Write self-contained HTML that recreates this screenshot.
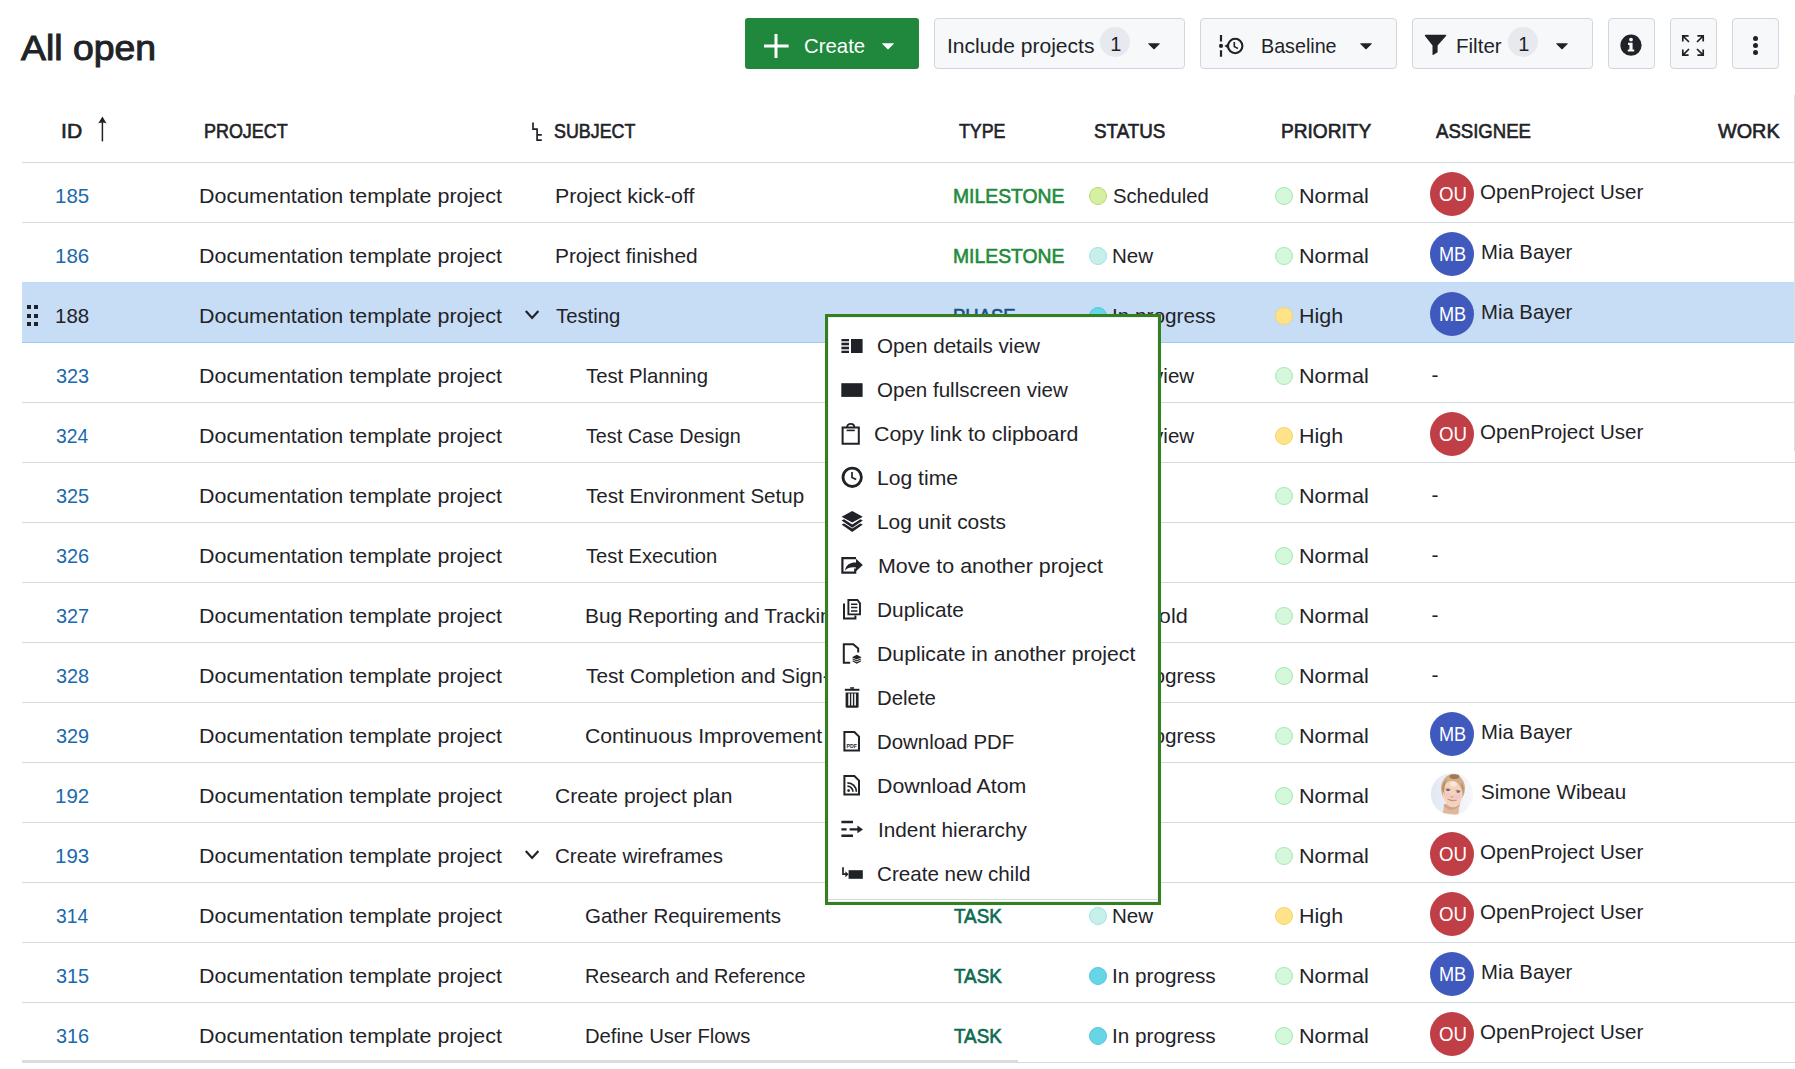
<!DOCTYPE html><html lang="en"><head><meta charset="utf-8"><title>All open</title><style>
html,body{margin:0;padding:0;background:#fff}
body{width:1795px;height:1069px;overflow:hidden;position:relative;font-family:"Liberation Sans",sans-serif;color:#1f2328}
.abs,.t,i{position:absolute;display:block}
.t{white-space:nowrap;line-height:1;transform-origin:0 0}
.dot{width:18px;height:18px;box-sizing:border-box;border-radius:50%;border:1px solid}
.av{width:44px;height:44px;border-radius:50%}
.ln{position:absolute;left:22px;width:1773px;height:1px;background:#d3dae2}
#menu{position:absolute;left:825px;top:314px;width:336px;height:591px;box-sizing:border-box;border:3px solid #35801e;background:#fff;box-shadow:inset 0 0 0 1px #f1effb}
</style></head><body>
<header class="toolbar">
<div style="position:absolute;top:18px;height:51px;box-sizing:border-box;border-radius:4px;left:745px;width:174px;background:#1f883d;border-radius:3px"></div>
<svg class="abs" style="left:763px;top:33px" width="26" height="26" viewBox="0 0 26 26"><path d="M13 1 V25 M1 13 H25.6" stroke="#fff" stroke-width="3" fill="none"/></svg>
<svg class="abs" style="left:881px;top:42px" width="14" height="9" viewBox="0 0 14 9"><path d="M1.6 1.2 H12.4 Q13.2 1.4 12.6 2.1 L7.6 7.1 Q7 7.6 6.4 7.1 L1.4 2.1 Q0.8 1.4 1.6 1.2Z" fill="#fff"/></svg>
<div style="position:absolute;top:18px;height:51px;box-sizing:border-box;border-radius:4px;left:934px;width:251px;background:#f6f8fa;border:1px solid #d0d7de"></div>
<i style="position:absolute;left:1100px;top:27px;width:30px;height:30px;border-radius:50%;background:#e6e9ee"></i>
<svg class="abs" style="left:1147px;top:42px" width="14" height="9" viewBox="0 0 14 9"><path d="M1.6 1.2 H12.4 Q13.2 1.4 12.6 2.1 L7.6 7.1 Q7 7.6 6.4 7.1 L1.4 2.1 Q0.8 1.4 1.6 1.2Z" fill="#1f2328"/></svg>
<div style="position:absolute;top:18px;height:51px;box-sizing:border-box;border-radius:4px;left:1200px;width:197px;background:#f6f8fa;border:1px solid #d0d7de"></div>
<svg class="abs" style="left:1217px;top:33px" width="28" height="26" viewBox="0 0 28 26">
<path d="M4 1.9 V8.5 M4 17.3 V23.8" stroke="#1f2328" stroke-width="2.2" fill="none"/>
<circle cx="4" cy="12.9" r="2.1" fill="#1f2328"/>
<circle cx="18.2" cy="13" r="7.2" stroke="#1f2328" stroke-width="2.1" fill="none"/>
<path d="M7.4 13 L11.6 10.2 V15.8Z" fill="#1f2328"/>
<path d="M17.3 9 V13.6 L20.9 15.5" stroke="#1f2328" stroke-width="1.6" fill="none"/>
</svg>
<svg class="abs" style="left:1359px;top:42px" width="14" height="9" viewBox="0 0 14 9"><path d="M1.6 1.2 H12.4 Q13.2 1.4 12.6 2.1 L7.6 7.1 Q7 7.6 6.4 7.1 L1.4 2.1 Q0.8 1.4 1.6 1.2Z" fill="#1f2328"/></svg>
<div style="position:absolute;top:18px;height:51px;box-sizing:border-box;border-radius:4px;left:1412px;width:181px;background:#f6f8fa;border:1px solid #d0d7de"></div>
<svg class="abs" style="left:1424px;top:34px" width="23" height="22" viewBox="0 0 23 22"><path d="M1.2 0.8 H21.8 Q22.6 1.2 22 2 L13.6 11.4 V18.2 L9.2 21 Q8.6 21.2 8.5 20.4 V11.4 L1 2 Q0.4 1.2 1.2 0.8Z" fill="#1f2328"/></svg>
<i style="position:absolute;left:1508px;top:27px;width:30px;height:30px;border-radius:50%;background:#e6e9ee"></i>
<svg class="abs" style="left:1554.7px;top:42px" width="14" height="9" viewBox="0 0 14 9"><path d="M1.6 1.2 H12.4 Q13.2 1.4 12.6 2.1 L7.6 7.1 Q7 7.6 6.4 7.1 L1.4 2.1 Q0.8 1.4 1.6 1.2Z" fill="#1f2328"/></svg>
<div style="position:absolute;top:18px;height:51px;box-sizing:border-box;border-radius:4px;left:1608px;width:47px;background:#f6f8fa;border:1px solid #d0d7de"></div>
<svg class="abs" style="left:1620px;top:34px" width="22" height="22" viewBox="0 0 22 22"><circle cx="11" cy="11.2" r="10.6" fill="#1f2328"/>
<circle cx="11" cy="5.6" r="1.9" fill="#f6f8fa"/><path d="M8 8.8 H12.6 V15.4 H14.2 V17.6 H7.8 V15.4 H9.4 V11 H8Z" fill="#f6f8fa"/></svg>
<div style="position:absolute;top:18px;height:51px;box-sizing:border-box;border-radius:4px;left:1670px;width:47px;background:#f6f8fa;border:1px solid #d0d7de"></div>
<svg class="abs" style="left:1681px;top:34px" width="24" height="23" viewBox="0 0 24 23"><g stroke="#1f2328" stroke-width="1.7" fill="none">
<path d="M1.8 7.6 V1.8 H7.6 M1.8 1.8 L8 8"/>
<path d="M16.4 1.8 H22.2 V7.6 M22.2 1.8 L16 8"/>
<path d="M1.8 15.4 V21.2 H7.6 M1.8 21.2 L8 15"/>
<path d="M16.4 21.2 H22.2 V15.4 M22.2 21.2 L16 15"/>
</g></svg>
<div style="position:absolute;top:18px;height:51px;box-sizing:border-box;border-radius:4px;left:1732px;width:47px;background:#f6f8fa;border:1px solid #d0d7de"></div>
<i style="position:absolute;left:1752.5px;top:35.800000000000004px;width:5.6px;height:5.6px;border-radius:50%;background:#1f2328"></i>
<i style="position:absolute;left:1752.5px;top:42.7px;width:5.6px;height:5.6px;border-radius:50%;background:#1f2328"></i>
<i style="position:absolute;left:1752.5px;top:49.6px;width:5.6px;height:5.6px;border-radius:50%;background:#1f2328"></i>
<span class="t" style="left:21.0px;top:29.8px;font-size:35px;-webkit-text-stroke:1.0px;transform:scaleX(1.0671);">All open</span>
<span class="t" style="left:803.5px;top:35.0px;font-size:21px;color:#fff;transform:scaleX(0.9698);">Create</span>
<span class="t" style="left:947.0px;top:35.0px;font-size:21px;transform:scaleX(1.0022);">Include projects</span>
<span class="t" style="left:1110.2px;top:33.8px;font-size:20px;transform:scaleX(1.0000);">1</span>
<span class="t" style="left:1261.1px;top:35.0px;font-size:21px;transform:scaleX(0.9382);">Baseline</span>
<span class="t" style="left:1456.3px;top:35.0px;font-size:21px;transform:scaleX(0.9787);">Filter</span>
<span class="t" style="left:1518.2px;top:33.8px;font-size:20px;transform:scaleX(1.0000);">1</span>
</header>
<main class="wp-table">
<div style="position:absolute;left:22px;top:283px;width:1773px;height:59px;background:#c7ddf5"></div>
<div class="thead">
<svg class="abs" style="left:97px;top:116px" width="11" height="26" viewBox="0 0 11 26"><path d="M5.4 3 V25.4" stroke="#1f2328" stroke-width="1.5" fill="none"/><path d="M5.4 0.4 L9.6 7.6 Q5.4 5.4 1.2 7.6Z" fill="#1f2328"/></svg>
<svg class="abs" style="left:531px;top:122px" width="12" height="20" viewBox="0 0 12 20"><path d="M2 0.5 V7.1 H6.1 V18.2 H10.8 M6.1 12.9 H10.8" stroke="#1f2328" stroke-width="1.7" fill="none"/></svg>
<span class="t" style="left:60.5px;top:120.2px;font-size:21px;-webkit-text-stroke:0.65px;transform:scaleX(1.0083);">ID</span>
<span class="t" style="left:203.6px;top:120.2px;font-size:21px;-webkit-text-stroke:0.65px;transform:scaleX(0.8541);">PROJECT</span>
<span class="t" style="left:553.5px;top:120.2px;font-size:21px;-webkit-text-stroke:0.65px;transform:scaleX(0.8503);">SUBJECT</span>
<span class="t" style="left:959.0px;top:120.2px;font-size:21px;-webkit-text-stroke:0.65px;transform:scaleX(0.8461);">TYPE</span>
<span class="t" style="left:1094.2px;top:120.2px;font-size:21px;-webkit-text-stroke:0.65px;transform:scaleX(0.8957);">STATUS</span>
<span class="t" style="left:1280.5px;top:120.2px;font-size:21px;-webkit-text-stroke:0.65px;transform:scaleX(0.9097);">PRIORITY</span>
<span class="t" style="left:1436.0px;top:120.2px;font-size:21px;-webkit-text-stroke:0.65px;transform:scaleX(0.8849);">ASSIGNEE</span>
<span class="t" style="left:1718.4px;top:120.2px;font-size:21px;-webkit-text-stroke:0.65px;transform:scaleX(0.9430);">WORK</span>
<div class="ln" style="top:162px"></div></div>
<div class="row">
<i class="dot" style="left:1089px;top:187px;background:#d6f0a2;border-color:#b9da70"></i>
<i class="dot" style="left:1275px;top:187px;background:#d5f7dc;border-color:#a6e8b0"></i>
<i class="av" style="left:1430px;top:172px;background:#c03e45"></i>
<span class="t" style="left:55.0px;top:185.2px;font-size:21px;color:#1b69ad;transform:scaleX(0.9743);">185</span>
<span class="t" style="left:198.5px;top:185.2px;font-size:21px;transform:scaleX(1.0215);">Documentation template project</span>
<span class="t" style="left:554.8px;top:185.2px;font-size:21px;transform:scaleX(1.0155);">Project kick-off</span>
<span class="t" style="left:953.1px;top:185.2px;font-size:21px;-webkit-text-stroke:0.65px;color:#1e8c3c;transform:scaleX(0.9211);">MILESTONE</span>
<span class="t" style="left:1113.3px;top:185.2px;font-size:21px;transform:scaleX(0.9638);">Scheduled</span>
<span class="t" style="left:1299.0px;top:185.2px;font-size:21px;transform:scaleX(1.0301);">Normal</span>
<span class="t" style="left:1438.7px;top:184.3px;font-size:20px;color:#fff;transform:scaleX(0.9350);">OU</span>
<span class="t" style="left:1480.0px;top:181.2px;font-size:21px;transform:scaleX(0.9788);">OpenProject User</span>
<div class="ln" style="top:222px"></div></div>
<div class="row">
<i class="dot" style="left:1089px;top:247px;background:#c8f0ea;border-color:#9fe2ea"></i>
<i class="dot" style="left:1275px;top:247px;background:#d5f7dc;border-color:#a6e8b0"></i>
<i class="av" style="left:1430px;top:232px;background:#3f59bc"></i>
<span class="t" style="left:55.0px;top:245.2px;font-size:21px;color:#1b69ad;transform:scaleX(0.9743);">186</span>
<span class="t" style="left:198.5px;top:245.2px;font-size:21px;transform:scaleX(1.0215);">Documentation template project</span>
<span class="t" style="left:554.8px;top:245.2px;font-size:21px;transform:scaleX(0.9937);">Project finished</span>
<span class="t" style="left:953.1px;top:245.2px;font-size:21px;-webkit-text-stroke:0.65px;color:#1e8c3c;transform:scaleX(0.9211);">MILESTONE</span>
<span class="t" style="left:1112.3px;top:245.2px;font-size:21px;transform:scaleX(0.9798);">New</span>
<span class="t" style="left:1299.0px;top:245.2px;font-size:21px;transform:scaleX(1.0301);">Normal</span>
<span class="t" style="left:1438.6px;top:244.3px;font-size:20px;color:#fff;transform:scaleX(0.9072);">MB</span>
<span class="t" style="left:1480.7px;top:241.2px;font-size:21px;transform:scaleX(0.9665);">Mia Bayer</span>
<div class="ln" style="top:282px;background:#b9dcfb"></div></div>
<div class="row selected">
<i style="left:27px;top:305.0px;width:4px;height:4px;background:#1f2328"></i>
<i style="left:34px;top:305.0px;width:4px;height:4px;background:#1f2328"></i>
<i style="left:27px;top:313.5px;width:4px;height:4px;background:#1f2328"></i>
<i style="left:34px;top:313.5px;width:4px;height:4px;background:#1f2328"></i>
<i style="left:27px;top:322.0px;width:4px;height:4px;background:#1f2328"></i>
<i style="left:34px;top:322.0px;width:4px;height:4px;background:#1f2328"></i>
<svg class="abs" style="left:524px;top:307px" width="16" height="14" viewBox="0 0 16 14"><path d="M1.8 3.9 L8.1 10.9 L14.4 3.9" fill="none" stroke="#1f2328" stroke-width="2.2"/></svg>
<i class="dot" style="left:1089px;top:307px;background:#68d5e6;border-color:#4fc8dd"></i>
<i class="dot" style="left:1275px;top:307px;background:#ffe38a;border-color:#f7d468"></i>
<i class="av" style="left:1430px;top:292px;background:#3f59bc"></i>
<span class="t" style="left:55.0px;top:305.2px;font-size:21px;transform:scaleX(0.9743);">188</span>
<span class="t" style="left:198.5px;top:305.2px;font-size:21px;transform:scaleX(1.0215);">Documentation template project</span>
<span class="t" style="left:555.8px;top:305.2px;font-size:21px;transform:scaleX(0.9672);">Testing</span>
<span class="t" style="left:953.1px;top:305.2px;font-size:21px;-webkit-text-stroke:0.65px;color:#1a4f88;transform:scaleX(0.8805);">PHASE</span>
<span class="t" style="left:1112.3px;top:305.2px;font-size:21px;transform:scaleX(0.9870);">In progress</span>
<span class="t" style="left:1299.0px;top:305.2px;font-size:21px;transform:scaleX(1.0238);">High</span>
<span class="t" style="left:1438.6px;top:304.3px;font-size:20px;color:#fff;transform:scaleX(0.9072);">MB</span>
<span class="t" style="left:1480.7px;top:301.2px;font-size:21px;transform:scaleX(0.9665);">Mia Bayer</span>
<div class="ln" style="top:342px;background:#9dcbf7"></div></div>
<div class="row">
<i class="dot" style="left:1089px;top:367px;background:#c8f0ea;border-color:#9fe2ea"></i>
<i class="dot" style="left:1275px;top:367px;background:#d5f7dc;border-color:#a6e8b0"></i>
<span class="t" style="left:56.0px;top:365.2px;font-size:21px;color:#1b69ad;transform:scaleX(0.9459);">323</span>
<span class="t" style="left:198.5px;top:365.2px;font-size:21px;transform:scaleX(1.0215);">Documentation template project</span>
<span class="t" style="left:585.8px;top:365.2px;font-size:21px;transform:scaleX(0.9673);">Test Planning</span>
<span class="t" style="left:954.0px;top:365.2px;font-size:21px;-webkit-text-stroke:0.65px;color:#0c6b52;transform:scaleX(0.8952);">TASK</span>
<span class="t" style="left:1112.3px;top:365.2px;font-size:21px;transform:scaleX(0.9778);">In review</span>
<span class="t" style="left:1299.0px;top:365.2px;font-size:21px;transform:scaleX(1.0301);">Normal</span>
<span class="t" style="left:1431.5px;top:363.7px;font-size:21px;transform:scaleX(1.0000);">-</span>
<div class="ln" style="top:402px"></div></div>
<div class="row">
<i class="dot" style="left:1089px;top:427px;background:#c8f0ea;border-color:#9fe2ea"></i>
<i class="dot" style="left:1275px;top:427px;background:#ffe38a;border-color:#f7d468"></i>
<i class="av" style="left:1430px;top:412px;background:#c03e45"></i>
<span class="t" style="left:56.0px;top:425.2px;font-size:21px;color:#1b69ad;transform:scaleX(0.9192);">324</span>
<span class="t" style="left:198.5px;top:425.2px;font-size:21px;transform:scaleX(1.0215);">Documentation template project</span>
<span class="t" style="left:585.8px;top:425.2px;font-size:21px;transform:scaleX(0.9402);">Test Case Design</span>
<span class="t" style="left:954.0px;top:425.2px;font-size:21px;-webkit-text-stroke:0.65px;color:#0c6b52;transform:scaleX(0.8952);">TASK</span>
<span class="t" style="left:1112.3px;top:425.2px;font-size:21px;transform:scaleX(0.9778);">In review</span>
<span class="t" style="left:1299.0px;top:425.2px;font-size:21px;transform:scaleX(1.0238);">High</span>
<span class="t" style="left:1438.7px;top:424.3px;font-size:20px;color:#fff;transform:scaleX(0.9350);">OU</span>
<span class="t" style="left:1480.0px;top:421.2px;font-size:21px;transform:scaleX(0.9788);">OpenProject User</span>
<div class="ln" style="top:462px"></div></div>
<div class="row">
<i class="dot" style="left:1089px;top:487px;background:#c8f0ea;border-color:#9fe2ea"></i>
<i class="dot" style="left:1275px;top:487px;background:#d5f7dc;border-color:#a6e8b0"></i>
<span class="t" style="left:56.0px;top:485.2px;font-size:21px;color:#1b69ad;transform:scaleX(0.9459);">325</span>
<span class="t" style="left:198.5px;top:485.2px;font-size:21px;transform:scaleX(1.0215);">Documentation template project</span>
<span class="t" style="left:585.8px;top:485.2px;font-size:21px;transform:scaleX(0.9781);">Test Environment Setup</span>
<span class="t" style="left:954.0px;top:485.2px;font-size:21px;-webkit-text-stroke:0.65px;color:#0c6b52;transform:scaleX(0.8952);">TASK</span>
<span class="t" style="left:1112.3px;top:485.2px;font-size:21px;transform:scaleX(0.9798);">New</span>
<span class="t" style="left:1299.0px;top:485.2px;font-size:21px;transform:scaleX(1.0301);">Normal</span>
<span class="t" style="left:1431.5px;top:483.7px;font-size:21px;transform:scaleX(1.0000);">-</span>
<div class="ln" style="top:522px"></div></div>
<div class="row">
<i class="dot" style="left:1089px;top:547px;background:#c8f0ea;border-color:#9fe2ea"></i>
<i class="dot" style="left:1275px;top:547px;background:#d5f7dc;border-color:#a6e8b0"></i>
<span class="t" style="left:56.0px;top:545.2px;font-size:21px;color:#1b69ad;transform:scaleX(0.9459);">326</span>
<span class="t" style="left:198.5px;top:545.2px;font-size:21px;transform:scaleX(1.0215);">Documentation template project</span>
<span class="t" style="left:585.8px;top:545.2px;font-size:21px;transform:scaleX(0.9603);">Test Execution</span>
<span class="t" style="left:954.0px;top:545.2px;font-size:21px;-webkit-text-stroke:0.65px;color:#0c6b52;transform:scaleX(0.8952);">TASK</span>
<span class="t" style="left:1112.3px;top:545.2px;font-size:21px;transform:scaleX(0.9798);">New</span>
<span class="t" style="left:1299.0px;top:545.2px;font-size:21px;transform:scaleX(1.0301);">Normal</span>
<span class="t" style="left:1431.5px;top:543.7px;font-size:21px;transform:scaleX(1.0000);">-</span>
<div class="ln" style="top:582px"></div></div>
<div class="row">
<i class="dot" style="left:1089px;top:607px;background:#f5d0c8;border-color:#eab0a5"></i>
<i class="dot" style="left:1275px;top:607px;background:#d5f7dc;border-color:#a6e8b0"></i>
<span class="t" style="left:56.0px;top:605.2px;font-size:21px;color:#1b69ad;transform:scaleX(0.9459);">327</span>
<span class="t" style="left:198.5px;top:605.2px;font-size:21px;transform:scaleX(1.0215);">Documentation template project</span>
<span class="t" style="left:584.8px;top:605.2px;font-size:21px;transform:scaleX(0.9920);">Bug Reporting and Tracking</span>
<span class="t" style="left:954.0px;top:605.2px;font-size:21px;-webkit-text-stroke:0.65px;color:#0c6b52;transform:scaleX(0.8952);">TASK</span>
<span class="t" style="left:1112.3px;top:605.2px;font-size:21px;transform:scaleX(1.0296);">On hold</span>
<span class="t" style="left:1299.0px;top:605.2px;font-size:21px;transform:scaleX(1.0301);">Normal</span>
<span class="t" style="left:1431.5px;top:603.7px;font-size:21px;transform:scaleX(1.0000);">-</span>
<div class="ln" style="top:642px"></div></div>
<div class="row">
<i class="dot" style="left:1089px;top:667px;background:#68d5e6;border-color:#4fc8dd"></i>
<i class="dot" style="left:1275px;top:667px;background:#d5f7dc;border-color:#a6e8b0"></i>
<span class="t" style="left:56.0px;top:665.2px;font-size:21px;color:#1b69ad;transform:scaleX(0.9459);">328</span>
<span class="t" style="left:198.5px;top:665.2px;font-size:21px;transform:scaleX(1.0215);">Documentation template project</span>
<span class="t" style="left:585.8px;top:665.2px;font-size:21px;transform:scaleX(0.9898);">Test Completion and Sign-off</span>
<span class="t" style="left:954.0px;top:665.2px;font-size:21px;-webkit-text-stroke:0.65px;color:#0c6b52;transform:scaleX(0.8952);">TASK</span>
<span class="t" style="left:1112.3px;top:665.2px;font-size:21px;transform:scaleX(0.9870);">In progress</span>
<span class="t" style="left:1299.0px;top:665.2px;font-size:21px;transform:scaleX(1.0301);">Normal</span>
<span class="t" style="left:1431.5px;top:663.7px;font-size:21px;transform:scaleX(1.0000);">-</span>
<div class="ln" style="top:702px"></div></div>
<div class="row">
<i class="dot" style="left:1089px;top:727px;background:#68d5e6;border-color:#4fc8dd"></i>
<i class="dot" style="left:1275px;top:727px;background:#d5f7dc;border-color:#a6e8b0"></i>
<i class="av" style="left:1430px;top:712px;background:#3f59bc"></i>
<span class="t" style="left:56.0px;top:725.2px;font-size:21px;color:#1b69ad;transform:scaleX(0.9459);">329</span>
<span class="t" style="left:198.5px;top:725.2px;font-size:21px;transform:scaleX(1.0215);">Documentation template project</span>
<span class="t" style="left:584.8px;top:725.2px;font-size:21px;transform:scaleX(1.0103);">Continuous Improvement</span>
<span class="t" style="left:954.0px;top:725.2px;font-size:21px;-webkit-text-stroke:0.65px;color:#0c6b52;transform:scaleX(0.8952);">TASK</span>
<span class="t" style="left:1112.3px;top:725.2px;font-size:21px;transform:scaleX(0.9870);">In progress</span>
<span class="t" style="left:1299.0px;top:725.2px;font-size:21px;transform:scaleX(1.0301);">Normal</span>
<span class="t" style="left:1438.6px;top:724.3px;font-size:20px;color:#fff;transform:scaleX(0.9072);">MB</span>
<span class="t" style="left:1480.7px;top:721.2px;font-size:21px;transform:scaleX(0.9665);">Mia Bayer</span>
<div class="ln" style="top:762px"></div></div>
<div class="row">
<i class="dot" style="left:1089px;top:787px;background:#c8f0ea;border-color:#9fe2ea"></i>
<i class="dot" style="left:1275px;top:787px;background:#d5f7dc;border-color:#a6e8b0"></i>
<svg class="abs" style="left:1431px;top:773px" width="42" height="42" viewBox="0 0 42 42"><defs><clipPath id="avc"><circle cx="21" cy="21.1" r="21.1"/></clipPath><linearGradient id="avg" x1="0" x2="1" y1="0" y2="0"><stop offset="0" stop-color="#e2e8f3"/><stop offset="1" stop-color="#f6f8fb"/></linearGradient></defs><g clip-path="url(#avc)"><rect width="42" height="42" fill="url(#avg)"/>
<ellipse cx="22" cy="15.6" rx="12" ry="14.4" fill="#d2ad88"/><ellipse cx="23.4" cy="3.6" rx="5" ry="2.4" fill="#a07858"/>
<path d="M13 31 L28.6 30 L27.4 42 L12 40Z" fill="#e2b79c"/><path d="M13.4 31 Q20 37 28.4 30.6 L28.4 33 Q20 40 13.2 33.6Z" fill="#cfa38a"/>
<ellipse cx="21.6" cy="21" rx="9.7" ry="13.4" transform="rotate(-7 21.6 21)" fill="#f3d2be"/>
<ellipse cx="16.4" cy="22" rx="3" ry="2.6" fill="#f5c6c2"/><ellipse cx="27" cy="23.4" rx="3" ry="2.6" fill="#f5c6c2"/>
<ellipse cx="22.6" cy="11" rx="3.4" ry="2.6" fill="#fae6d6"/>
<path d="M14.4 16.2 Q17 15 19.6 16.6 M24.6 17.6 Q27.2 16.6 29.6 18.2" stroke="#a9794f" stroke-width="0.9" fill="none"/>
<ellipse cx="17" cy="17.2" rx="1.7" ry="0.9" fill="#4a5578"/><ellipse cx="27.2" cy="18.8" rx="1.7" ry="0.9" fill="#4a5578"/>
<path d="M19.6 23.6 Q21 24.6 22.6 23.8" stroke="#c08a72" stroke-width="0.9" fill="none"/>
<path d="M16.6 26 Q20.6 29.4 25.6 27.2 Q20.8 28 16.6 26Z" fill="#d98686" stroke="#d98686" stroke-width="0.7"/>
<path d="M11.2 16 Q11.6 9 16 6.6 Q14 10 13.4 15 Q13 19 13.6 22Z" fill="#b98d62"/><path d="M30 9 Q33.6 13 32.6 21 Q32 17 30.4 13.6Z" fill="#b98d62"/>
</g></svg>
<span class="t" style="left:55.0px;top:785.2px;font-size:21px;color:#1b69ad;transform:scaleX(0.9743);">192</span>
<span class="t" style="left:198.5px;top:785.2px;font-size:21px;transform:scaleX(1.0215);">Documentation template project</span>
<span class="t" style="left:554.8px;top:785.2px;font-size:21px;transform:scaleX(1.0003);">Create project plan</span>
<span class="t" style="left:954.0px;top:785.2px;font-size:21px;-webkit-text-stroke:0.65px;color:#0c6b52;transform:scaleX(0.8952);">TASK</span>
<span class="t" style="left:1112.3px;top:785.2px;font-size:21px;transform:scaleX(0.9798);">New</span>
<span class="t" style="left:1299.0px;top:785.2px;font-size:21px;transform:scaleX(1.0301);">Normal</span>
<span class="t" style="left:1481.0px;top:781.2px;font-size:21px;transform:scaleX(0.9799);">Simone Wibeau</span>
<div class="ln" style="top:822px"></div></div>
<div class="row">
<svg class="abs" style="left:524px;top:847px" width="16" height="14" viewBox="0 0 16 14"><path d="M1.8 3.9 L8.1 10.9 L14.4 3.9" fill="none" stroke="#1f2328" stroke-width="2.2"/></svg>
<i class="dot" style="left:1089px;top:847px;background:#c8f0ea;border-color:#9fe2ea"></i>
<i class="dot" style="left:1275px;top:847px;background:#d5f7dc;border-color:#a6e8b0"></i>
<i class="av" style="left:1430px;top:832px;background:#c03e45"></i>
<span class="t" style="left:55.0px;top:845.2px;font-size:21px;color:#1b69ad;transform:scaleX(0.9743);">193</span>
<span class="t" style="left:198.5px;top:845.2px;font-size:21px;transform:scaleX(1.0215);">Documentation template project</span>
<span class="t" style="left:554.8px;top:845.2px;font-size:21px;transform:scaleX(0.9797);">Create wireframes</span>
<span class="t" style="left:954.0px;top:845.2px;font-size:21px;-webkit-text-stroke:0.65px;color:#0c6b52;transform:scaleX(0.8952);">TASK</span>
<span class="t" style="left:1112.3px;top:845.2px;font-size:21px;transform:scaleX(0.9798);">New</span>
<span class="t" style="left:1299.0px;top:845.2px;font-size:21px;transform:scaleX(1.0301);">Normal</span>
<span class="t" style="left:1438.7px;top:844.3px;font-size:20px;color:#fff;transform:scaleX(0.9350);">OU</span>
<span class="t" style="left:1480.0px;top:841.2px;font-size:21px;transform:scaleX(0.9788);">OpenProject User</span>
<div class="ln" style="top:882px"></div></div>
<div class="row">
<i class="dot" style="left:1089px;top:907px;background:#c8f0ea;border-color:#9fe2ea"></i>
<i class="dot" style="left:1275px;top:907px;background:#ffe38a;border-color:#f7d468"></i>
<i class="av" style="left:1430px;top:892px;background:#c03e45"></i>
<span class="t" style="left:56.0px;top:905.2px;font-size:21px;color:#1b69ad;transform:scaleX(0.9192);">314</span>
<span class="t" style="left:198.5px;top:905.2px;font-size:21px;transform:scaleX(1.0215);">Documentation template project</span>
<span class="t" style="left:584.8px;top:905.2px;font-size:21px;transform:scaleX(0.9766);">Gather Requirements</span>
<span class="t" style="left:954.0px;top:905.2px;font-size:21px;-webkit-text-stroke:0.65px;color:#0c6b52;transform:scaleX(0.8952);">TASK</span>
<span class="t" style="left:1112.3px;top:905.2px;font-size:21px;transform:scaleX(0.9798);">New</span>
<span class="t" style="left:1299.0px;top:905.2px;font-size:21px;transform:scaleX(1.0238);">High</span>
<span class="t" style="left:1438.7px;top:904.3px;font-size:20px;color:#fff;transform:scaleX(0.9350);">OU</span>
<span class="t" style="left:1480.0px;top:901.2px;font-size:21px;transform:scaleX(0.9788);">OpenProject User</span>
<div class="ln" style="top:942px"></div></div>
<div class="row">
<i class="dot" style="left:1089px;top:967px;background:#68d5e6;border-color:#4fc8dd"></i>
<i class="dot" style="left:1275px;top:967px;background:#d5f7dc;border-color:#a6e8b0"></i>
<i class="av" style="left:1430px;top:952px;background:#3f59bc"></i>
<span class="t" style="left:56.0px;top:965.2px;font-size:21px;color:#1b69ad;transform:scaleX(0.9459);">315</span>
<span class="t" style="left:198.5px;top:965.2px;font-size:21px;transform:scaleX(1.0215);">Documentation template project</span>
<span class="t" style="left:584.9px;top:965.2px;font-size:21px;transform:scaleX(0.9444);">Research and Reference</span>
<span class="t" style="left:954.0px;top:965.2px;font-size:21px;-webkit-text-stroke:0.65px;color:#0c6b52;transform:scaleX(0.8952);">TASK</span>
<span class="t" style="left:1112.3px;top:965.2px;font-size:21px;transform:scaleX(0.9870);">In progress</span>
<span class="t" style="left:1299.0px;top:965.2px;font-size:21px;transform:scaleX(1.0301);">Normal</span>
<span class="t" style="left:1438.6px;top:964.3px;font-size:20px;color:#fff;transform:scaleX(0.9072);">MB</span>
<span class="t" style="left:1480.7px;top:961.2px;font-size:21px;transform:scaleX(0.9665);">Mia Bayer</span>
<div class="ln" style="top:1002px"></div></div>
<div class="row">
<i class="dot" style="left:1089px;top:1027px;background:#68d5e6;border-color:#4fc8dd"></i>
<i class="dot" style="left:1275px;top:1027px;background:#d5f7dc;border-color:#a6e8b0"></i>
<i class="av" style="left:1430px;top:1012px;background:#c03e45"></i>
<span class="t" style="left:56.0px;top:1025.2px;font-size:21px;color:#1b69ad;transform:scaleX(0.9459);">316</span>
<span class="t" style="left:198.5px;top:1025.2px;font-size:21px;transform:scaleX(1.0215);">Documentation template project</span>
<span class="t" style="left:584.8px;top:1025.2px;font-size:21px;transform:scaleX(0.9638);">Define User Flows</span>
<span class="t" style="left:954.0px;top:1025.2px;font-size:21px;-webkit-text-stroke:0.65px;color:#0c6b52;transform:scaleX(0.8952);">TASK</span>
<span class="t" style="left:1112.3px;top:1025.2px;font-size:21px;transform:scaleX(0.9870);">In progress</span>
<span class="t" style="left:1299.0px;top:1025.2px;font-size:21px;transform:scaleX(1.0301);">Normal</span>
<span class="t" style="left:1438.7px;top:1024.3px;font-size:20px;color:#fff;transform:scaleX(0.9350);">OU</span>
<span class="t" style="left:1480.0px;top:1021.2px;font-size:21px;transform:scaleX(0.9788);">OpenProject User</span>
<div class="ln" style="top:1062px"></div></div>
<div style="position:absolute;left:1794px;top:95px;width:1px;height:356px;background:#dedede"></div>
<div style="position:absolute;left:22px;top:1060px;width:996px;height:3px;background:#dcdcdc"></div>
</main>
<nav class="context-menu"><div id="menu"><div style="position:absolute;left:0;top:582px;width:330px;height:1px;background:#d3dae2"></div></div>
<div class="item">
<svg class="abs" style="left:841px;top:338px" width="23" height="16" viewBox="0 0 23 16"><path d="M0.4 2 H8 M0.4 6 H8 M0.4 10 H8 M0.4 14 H8" stroke="#1f2328" stroke-width="2" /><path d="M0.4 4 H8 M0.4 8 H8 M0.4 12 H8" stroke="#b9bbbe" stroke-width="2"/><rect x="10" y="1" width="11.6" height="14" fill="#1f2328"/></svg>
<span class="t" style="left:877.2px;top:334.9px;font-size:21px;transform:scaleX(0.9820);">Open details view</span>
</div>
<div class="item">
<svg class="abs" style="left:841px;top:383px" width="23" height="15" viewBox="0 0 23 15"><rect x="0.3" y="0.2" width="21.3" height="13.7" fill="#1f2328"/></svg>
<span class="t" style="left:877.2px;top:378.9px;font-size:21px;transform:scaleX(0.9786);">Open fullscreen view</span>
</div>
<div class="item">
<svg class="abs" style="left:841px;top:423px" width="20" height="23" viewBox="0 0 20 23"><path d="M1.6 4.6 H17.8 V20.8 H1.6Z" fill="none" stroke="#1f2328" stroke-width="2"/><path d="M5.6 7.4 H13.8" stroke="#1f2328" stroke-width="1.6"/><path d="M6 4.4 C6 -0.2 13.4 -0.2 13.4 4.4" fill="none" stroke="#1f2328" stroke-width="1.8"/></svg>
<span class="t" style="left:874.2px;top:422.9px;font-size:21px;transform:scaleX(1.0186);">Copy link to clipboard</span>
</div>
<div class="item">
<svg class="abs" style="left:841px;top:466px" width="23" height="23" viewBox="0 0 23 23"><circle cx="11.2" cy="11.3" r="9.2" fill="none" stroke="#1f2328" stroke-width="2.8"/><path d="M11 6 V11.4 L15.2 13.6" fill="none" stroke="#1f2328" stroke-width="1.7"/></svg>
<span class="t" style="left:877.2px;top:466.9px;font-size:21px;transform:scaleX(1.0055);">Log time</span>
</div>
<div class="item">
<svg class="abs" style="left:841px;top:510px" width="23" height="23" viewBox="0 0 23 23"><path d="M11.2 1 L21.8 6.8 L11.2 12.5 L0.6 6.8Z" fill="#1f2328"/><path d="M0.6 10.4 L3 9.2 L11.2 14.4 L19.4 9.2 L21.8 10.4 L11.2 17.7Z" fill="#1f2328"/><path d="M0.6 14.6 L3 13.4 L11.2 18.6 L19.4 13.4 L21.8 14.6 L11.2 21.9Z" fill="#1f2328"/></svg>
<span class="t" style="left:877.2px;top:510.9px;font-size:21px;transform:scaleX(0.9947);">Log unit costs</span>
</div>
<div class="item">
<svg class="abs" style="left:841px;top:556px" width="23" height="19" viewBox="0 0 23 19"><path d="M15 2.2 H1.4 V16.6 H14.2 V12.6" fill="none" stroke="#1f2328" stroke-width="2.2"/><path d="M4 14.4 C5 8.4 9.6 6.2 15 6.4 V2.8 L21.8 9 L15 15.2 V11.4 C10.4 10.6 6.6 11.6 4 14.4Z" fill="#1f2328"/></svg>
<span class="t" style="left:877.5px;top:554.9px;font-size:21px;transform:scaleX(1.0201);">Move to another project</span>
</div>
<div class="item">
<svg class="abs" style="left:842px;top:598px" width="20" height="23" viewBox="0 0 20 23"><path d="M6.4 2 H15.4 L18 5.4 V16.4 H6.4Z" fill="none" stroke="#1f2328" stroke-width="1.9"/><path d="M9 6.2 H15.4 M9 9.6 H15.4 M9 13 H15.4" stroke="#1f2328" stroke-width="1.5"/><path d="M2 5.4 V20.6 H13.4 V17.4" fill="none" stroke="#1f2328" stroke-width="2"/></svg>
<span class="t" style="left:877.3px;top:598.9px;font-size:21px;transform:scaleX(0.9922);">Duplicate</span>
</div>
<div class="item">
<svg class="abs" style="left:842px;top:642px" width="21" height="23" viewBox="0 0 21 23"><path d="M8.2 20.8 H1.8 V2.2 H11.2 L16.2 6.4 V10.4" fill="none" stroke="#1f2328" stroke-width="2"/><path d="M14.8 12.8 L19.6 15.2 L14.8 17.6 L10 15.2Z" fill="#1f2328"/><path d="M10 17 L11.4 16.4 L14.8 18.2 L18.2 16.4 L19.6 17 L14.8 19.6Z M10 19 L11.4 18.4 L14.8 20.2 L18.2 18.4 L19.6 19 L14.8 21.8Z" fill="#1f2328"/></svg>
<span class="t" style="left:877.3px;top:642.9px;font-size:21px;transform:scaleX(1.0105);">Duplicate in another project</span>
</div>
<div class="item">
<svg class="abs" style="left:844px;top:686px" width="17" height="23" viewBox="0 0 17 23"><path d="M6.2 1.2 H10 V2.8 H6.2Z" fill="#1f2328"/><path d="M0.8 3.8 H15.4" stroke="#1f2328" stroke-width="2"/><path d="M1.6 6.4 H14.6 V20.6 Q14.6 21.8 13.4 21.8 H2.8 Q1.6 21.8 1.6 20.6Z" fill="#1f2328"/><path d="M5.1 7.6 V19.6 M8.1 7.6 V19.6 M11.1 7.6 V19.6" stroke="#fff" stroke-width="1.6"/></svg>
<span class="t" style="left:877.3px;top:686.9px;font-size:21px;transform:scaleX(0.9708);">Delete</span>
</div>
<div class="item">
<svg class="abs" style="left:842px;top:730px" width="20" height="23" viewBox="0 0 20 23"><path d="M2.4 2 H12.4 L17 6.6 V20.6 H2.4Z" fill="none" stroke="#1f2328" stroke-width="2"/><text x="4.6" y="17.6" font-family="Liberation Sans, sans-serif" font-size="5.2" font-weight="700" fill="#1f2328">PDF</text></svg>
<span class="t" style="left:877.3px;top:730.9px;font-size:21px;transform:scaleX(0.9713);">Download PDF</span>
</div>
<div class="item">
<svg class="abs" style="left:842px;top:774px" width="20" height="23" viewBox="0 0 20 23"><path d="M2.4 2 H12.4 L17 6.6 V20.6 H2.4Z" fill="none" stroke="#1f2328" stroke-width="2"/><circle cx="6.6" cy="16.6" r="1.4" fill="#1f2328"/><path d="M5.4 12.2 A5.6 5.6 0 0 1 11 17.8 M5.4 8.8 A9 9 0 0 1 14.4 17.8" fill="none" stroke="#1f2328" stroke-width="1.7"/></svg>
<span class="t" style="left:877.3px;top:774.9px;font-size:21px;transform:scaleX(1.0153);">Download Atom</span>
</div>
<div class="item">
<svg class="abs" style="left:841px;top:819px" width="23" height="20" viewBox="0 0 23 20"><path d="M0.4 3 H12 M0.4 10.4 H5.6 M8.6 10.4 H18 M0.4 16.8 H12" stroke="#1f2328" stroke-width="2.4" fill="none"/><path d="M16.4 6.6 L22 10.4 L16.4 14.2Z" fill="#1f2328"/></svg>
<span class="t" style="left:877.5px;top:818.9px;font-size:21px;transform:scaleX(0.9887);">Indent hierarchy</span>
</div>
<div class="item">
<svg class="abs" style="left:841px;top:866px" width="23" height="14" viewBox="0 0 23 14"><path d="M2 1.2 V8.2 H5" fill="none" stroke="#1f2328" stroke-width="1.7"/><path d="M4.4 5.2 L7.6 8.2 L4.4 11.2Z" fill="#1f2328"/><rect x="7.6" y="4.2" width="14.2" height="8.6" fill="#1f2328"/></svg>
<span class="t" style="left:877.2px;top:862.9px;font-size:21px;transform:scaleX(0.9810);">Create new child</span>
</div>
</nav>
</body></html>
